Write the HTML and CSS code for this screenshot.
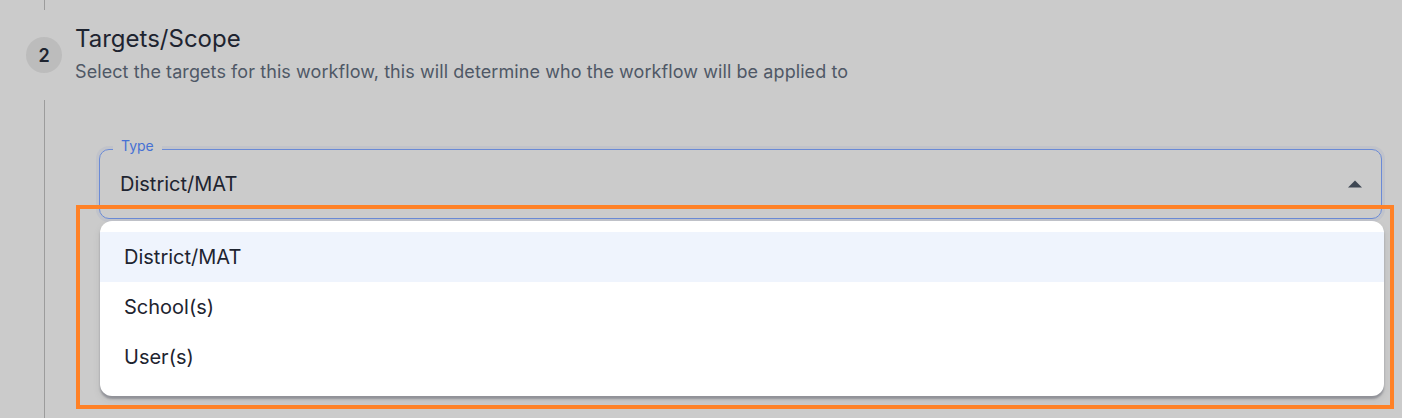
FILE: index.html
```html
<!DOCTYPE html>
<html lang="en">
<head>
<meta charset="utf-8">
<title>Targets/Scope</title>
<link rel="stylesheet" href="styles.css">
</head>
<body>
<div class="page">
  <div class="step">
    <div class="rail">
      <div class="rail-line rail-top"></div>
      <div class="step-num">2</div>
      <div class="rail-line rail-rest"></div>
    </div>
    <div class="step-body">
      <h2 class="step-title">Targets/Scope</h2>
      <p class="step-desc">Select the targets for this workflow, this will determine who the workflow will be applied to</p>
      <div class="field">
        <div class="select">
          <span class="select-label">Type</span>
          <span class="select-value">District/MAT</span>
          <svg class="select-arrow" width="14" height="8" viewBox="0 0 14 8"><path d="M0 7.5 L7 0.5 L14 7.5 Z" fill="#3e4753"/></svg>
        </div>
        <ul class="menu">
          <li class="menu-item is-selected">District/MAT</li>
          <li class="menu-item">School(s)</li>
          <li class="menu-item">User(s)</li>
        </ul>
      </div>
    </div>
  </div>
  <div class="highlight"></div>
</div>
</body>
</html>
```

FILE: styles.css
```css
* { box-sizing: border-box; }
html, body {
  margin: 0;
  padding: 0;
  background: #cbcbcb;
  font-family: Inter, "Noto Sans", "Liberation Sans", sans-serif;
  color: #1e2430;
}
.page {
  position: relative;
  width: 1402px;
  height: 418px;
  overflow: hidden;
}
.step {
  display: flex;
  height: 100%;
  padding-left: 26px;
}
.rail {
  width: 36px;
  display: flex;
  flex-direction: column;
  align-items: center;
  gap: 27px;
}
.rail-line {
  width: 1px;
  background: #9c9c9c;
}
.rail-top { height: 10px; }
.rail-rest { flex: 1; }
.step-num {
  width: 36px;
  height: 36px;
  border-radius: 50%;
  background: #bcbcbc;
  display: flex;
  align-items: center;
  justify-content: center;
  font-size: 18px;
  font-weight: 600;
  color: #1e2430;
}
.step-body {
  flex: 1;
  padding-left: 13px;
  padding-top: 24px;
}
.step-title {
  margin: 0;
  font-size: 24px;
  line-height: 30px;
  font-weight: 400;
  color: #1e2430;
}
.step-desc {
  margin: 6px 0 0;
  font-size: 18px;
  line-height: 24px;
  letter-spacing: 0.08px;
  color: #4f5866;
}
.field {
  position: relative;
  margin: 65px 0 0 24px;
  width: 1283px;
}
.select {
  position: relative;
  height: 70px;
  border: 1px solid #6a8ad6;
  border-radius: 10px;
  box-shadow: 0 0 0 3px rgba(120, 140, 200, 0.12);
  display: flex;
  align-items: center;
  justify-content: space-between;
  padding: 0 19px 0 20px;
}
.select-label {
  position: absolute;
  left: 13px;
  top: -13px;
  padding: 0 8px;
  background: #cbcbcb;
  font-size: 14px;
  line-height: 18px;
  color: #4671d4;
}
.select-value {
  font-size: 20px;
  line-height: 26px;
  color: #1e2430;
}
.select-arrow { display: block; }
.menu {
  position: absolute;
  left: 1px;
  top: 72px;
  width: 1284px;
  margin: 0;
  padding: 11px 0 14px;
  list-style: none;
  background: #ffffff;
  border-radius: 12px;
  box-shadow: 0 3px 2px rgba(60, 64, 80, 0.35), 0 4px 8px rgba(0, 0, 0, 0.08);
}
.menu-item {
  height: 50px;
  display: flex;
  align-items: center;
  padding-left: 24px;
  font-size: 20px;
  color: #1e2430;
}
.menu-item.is-selected {
  background: #eff4fd;
}
.highlight {
  position: absolute;
  left: 76px;
  top: 205px;
  width: 1318px;
  height: 204px;
  border: 4px solid #ff8126;
  pointer-events: none;
}
```
